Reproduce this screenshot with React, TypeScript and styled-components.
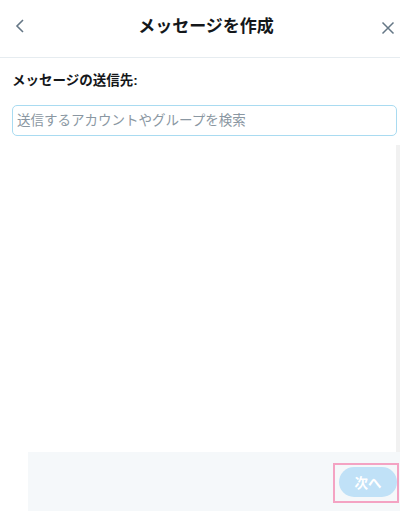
import React from 'react';
import styled, { createGlobalStyle } from 'styled-components';

const GlobalStyle = createGlobalStyle`
  html, body {
    margin: 0;
    padding: 0;
    background: #ffffff;
  }
  body {
    font-family: "Liberation Sans", "Noto Sans CJK JP", sans-serif;
    color: #14171a;
  }
`;

const Page = styled.div`
  width: 400px;
  height: 511px;
  display: flex;
  flex-direction: column;
  overflow: hidden;
`;

const Header = styled.div`
  height: 58px;
  box-sizing: border-box;
  flex-shrink: 0;
  display: flex;
  align-items: flex-start;
  justify-content: space-between;
  padding: 16px 1px 0 9px;
  border-bottom: 1px solid #e6ecf0;
`;

const IconButton = styled.button<{ $top: number }>`
  width: 22px;
  height: 22px;
  display: flex;
  align-items: center;
  justify-content: center;
  padding: 0;
  border: none;
  background: none;
  color: #657786;
  margin-top: ${(p) => p.$top}px;
`;

const Title = styled.h1`
  margin: 1px 0 0 4px;
  font-size: 17px;
  line-height: 20px;
  font-weight: bold;
  color: #14171a;
`;

const Body = styled.div`
  flex: 1;
  display: flex;
  flex-direction: column;
  padding: 12px 0 0 12px;
  min-height: 0;
`;

const Label = styled.div`
  font-size: 13.5px;
  font-weight: bold;
  line-height: 18px;
  margin-top: 2px;
`;

const SearchInput = styled.input`
  margin: 15px 3px 0 0;
  height: 31px;
  box-sizing: border-box;
  border: 1px solid #a9dbf1;
  border-radius: 5px;
  padding: 0 4px;
  font-family: "Liberation Sans", "Noto Sans CJK JP", sans-serif;
  font-size: 13.5px;
  color: #14171a;
  outline: none;
  &::placeholder {
    color: #8a97a2;
  }
`;

const Results = styled.div`
  flex: 1;
  margin-top: 9px;
  display: flex;
  justify-content: flex-end;
`;

const Track = styled.div`
  width: 4px;
  background: #f1f1f1;
`;

const Footer = styled.div`
  height: 59px;
  flex-shrink: 0;
  margin-left: 28px;
  background: #f5f8fa;
  display: flex;
  justify-content: flex-end;
  align-items: flex-start;
  padding: 11px 1px 0 0;
  box-sizing: border-box;
`;

const Highlight = styled.div`
  border: 2px solid #f4a3c3;
  padding: 2px 0 4px 4px;
`;

const NextButton = styled.button`
  width: 58px;
  height: 30px;
  border: none;
  border-radius: 15px;
  background: #c0e1f7;
  color: #ffffff;
  font-family: "Liberation Sans", "Noto Sans CJK JP", sans-serif;
  font-size: 13.5px;
  font-weight: bold;
  padding: 0;
`;

export default function App() {
  return (
    <Page>
      <GlobalStyle />
      <Header>
        <IconButton $top={-1}>
          <svg width="14" height="16" viewBox="0 0 14 16" fill="none" stroke="currentColor" strokeWidth="1.6">
            <path d="M10 2 L4 8 L10 14" />
          </svg>
        </IconButton>
        <Title>メッセージを作成</Title>
        <IconButton $top={1}>
          <svg width="14" height="14" viewBox="0 0 14 14" fill="none" stroke="currentColor" strokeWidth="1.5">
            <path d="M1.5 1.5 L12.5 12.5 M12.5 1.5 L1.5 12.5" />
          </svg>
        </IconButton>
      </Header>
      <Body>
        <Label>メッセージの送信先:</Label>
        <SearchInput placeholder="送信するアカウントやグループを検索" />
        <Results>
          <Track />
        </Results>
      </Body>
      <Footer>
        <Highlight>
          <NextButton>次へ</NextButton>
        </Highlight>
      </Footer>
    </Page>
  );
}
